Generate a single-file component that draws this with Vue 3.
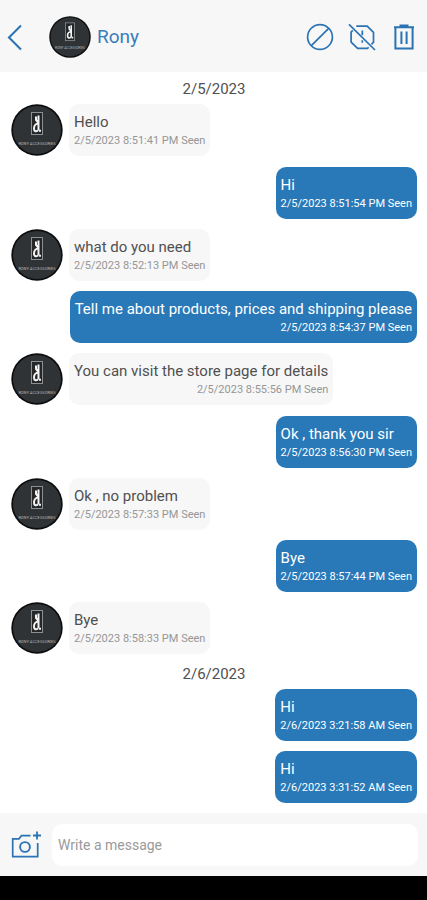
<script setup>
import { ref } from 'vue'

const draft = ref('')

const entries = [
  { type: 'date', text: '2/5/2023' },
  { type: 'in', text: 'Hello', time: '2/5/2023 8:51:41 PM Seen' },
  { type: 'out', text: 'Hi', time: '2/5/2023 8:51:54 PM Seen' },
  { type: 'in', text: 'what do you need', time: '2/5/2023 8:52:13 PM Seen' },
  { type: 'out', text: 'Tell me about products, prices and shipping please', time: '2/5/2023 8:54:37 PM Seen' },
  { type: 'in', text: 'You can visit the store page for details', time: '2/5/2023 8:55:56 PM Seen' },
  { type: 'out', text: 'Ok , thank you sir', time: '2/5/2023 8:56:30 PM Seen' },
  { type: 'in', text: 'Ok , no problem', time: '2/5/2023 8:57:33 PM Seen' },
  { type: 'out', text: 'Bye', time: '2/5/2023 8:57:44 PM Seen' },
  { type: 'in', text: 'Bye', time: '2/5/2023 8:58:33 PM Seen' },
  { type: 'date', text: '2/6/2023' },
  { type: 'out', text: 'Hi', time: '2/6/2023 3:21:58 AM Seen' },
  { type: 'out', text: 'Hi', time: '2/6/2023 3:31:52 AM Seen' },
]
</script>

<template>
  <div class="app">
    <header class="top">
      <button class="icon back" type="button" aria-label="Back">
        <svg width="16" height="28" viewBox="0 0 16 28"><path d="M14 2.5L2 14.5L14 26.5" stroke-width="2.1" /></svg>
      </button>
      <svg class="avatar small" viewBox="0 0 52 52" aria-hidden="true">
        <circle cx="26" cy="26" r="25.7" fill="#0c0d0e" />
        <circle cx="26" cy="26" r="24" fill="#303335" />
        <rect x="20.5" y="8.5" width="11" height="22" fill="#242628" stroke="#8d9092" />
        <path class="mark" d="M27.5 11.5V26.5M27.5 19.5C24.5 19.5 23 22 23 24.5S24.5 28 27 26.5M27.5 19L25 16V12.5M28 26.8h2" />
        <text x="26" y="41" class="brand" text-anchor="middle">RONY ACCESSORIES</text>
      </svg>
      <h1 class="name">Rony</h1>
      <div class="actions">
        <button class="icon" type="button" aria-label="Block">
          <svg width="28" height="28" viewBox="0 0 28 28"><circle cx="14" cy="14" r="12.4" /><path d="M5.3 22.7L22.7 5.3" /></svg>
        </button>
        <button class="icon" type="button" aria-label="Report off">
          <svg width="28" height="28" viewBox="0 0 28 28">
            <path d="M8.3 3.2h10.9l6.3 6.2v9.8l-2 2.1M20.7 24.3l-1.3 1.1H9.6l-6.5-6.3V9.2l1.7-1.8" />
            <path d="M14.3 7.6v4.6M14.3 17.3v2.4" />
            <path d="M1 1.3L27 27" />
          </svg>
        </button>
        <button class="icon" type="button" aria-label="Delete">
          <svg width="28" height="28" viewBox="0 0 28 28">
            <path d="M5.4 4.5v20.9h17.2V4.5" stroke-width="2" />
            <path d="M4 4.3h20M9.5 2.6h9M11.4 8.5v12.5M16.6 8.5v12.5" stroke-width="2" />
          </svg>
        </button>
      </div>
    </header>

    <main class="thread">
      <template v-for="(entry, i) in entries" :key="i">
        <time v-if="entry.type === 'date'" class="date">{{ entry.text }}</time>
        <article v-else class="row" :class="entry.type">
          <svg v-if="entry.type === 'in'" class="avatar" viewBox="0 0 52 52" aria-hidden="true">
            <circle cx="26" cy="26" r="25.7" fill="#0c0d0e" />
            <circle cx="26" cy="26" r="24" fill="#303335" />
            <rect x="20.5" y="8.5" width="11" height="22" fill="#242628" stroke="#8d9092" />
            <path class="mark" d="M27.5 11.5V26.5M27.5 19.5C24.5 19.5 23 22 23 24.5S24.5 28 27 26.5M27.5 19L25 16V12.5M28 26.8h2" />
            <text x="26" y="41" class="brand" text-anchor="middle">RONY ACCESSORIES</text>
          </svg>
          <div class="bubble">
            <p class="text">{{ entry.text }}</p>
            <time class="stamp">{{ entry.time }}</time>
          </div>
        </article>
      </template>
    </main>

    <form class="composer" @submit.prevent>
      <button class="icon" type="button" aria-label="Add photo">
        <svg width="30" height="28" viewBox="0 0 30 28">
          <path d="M19.5 4.7h-9L8 7.8H1.7v17.9h25V12" />
          <circle cx="14" cy="16" r="4.9" stroke-width="1.9" />
          <path d="M22 4.5h8M26 .6v7.8" stroke-width="1.8" />
        </svg>
      </button>
      <input v-model="draft" class="field" type="text" placeholder="Write a message" aria-label="Write a message" />
    </form>
    <div class="navbar"></div>
  </div>
</template>

<style>
body {
  margin: 0;
  background: #fff;
}
</style>

<style scoped>
.app {
  display: flex;
  flex-direction: column;
  min-height: 100vh;
  font-family: Roboto, sans-serif;
  color: #505050;
}
.top {
  display: flex;
  align-items: center;
  box-sizing: border-box;
  height: 72px;
  padding: 2px 9px 0 7px;
  background: #f7f7f7;
}
.icon {
  display: flex;
  padding: 0;
  border: 0;
  background: none;
  cursor: pointer;
}
.icon svg {
  fill: none;
  stroke: #2b73b3;
  stroke-width: 1.7;
}
.avatar {
  flex: none;
  width: 52px;
  height: 52px;
}
.avatar.small {
  width: 42px;
  height: 42px;
  margin-left: 26px;
}
.mark {
  fill: none;
  stroke: #f4f4f4;
  stroke-width: 2;
}
.brand {
  font: 4px Roboto, sans-serif;
  fill: #b4b6b8;
}
.name {
  margin: 0 0 0 6px;
  font-size: 19px;
  font-weight: 400;
  line-height: 24px;
  color: #3a7dbb;
}
.actions {
  display: flex;
  gap: 14px;
  margin-left: auto;
}
.thread {
  flex: 1;
  display: flex;
  flex-direction: column;
  justify-content: space-between;
  padding: 8px 10px 10px 11px;
}
.date {
  align-self: center;
  margin-bottom: -4px;
  font-size: 15px;
  line-height: 18px;
}
.row {
  display: flex;
  gap: 6px;
}
.row.out {
  justify-content: flex-end;
}
.bubble {
  display: flex;
  flex-direction: column;
  box-sizing: border-box;
  min-width: 140px;
  height: 52px;
  padding: 8px 5px 0;
  border-radius: 10px;
  background: #f7f7f7;
}
.out .bubble {
  background: #2979b9;
  color: #fff;
}
.text {
  margin: 0;
  font-size: 15px;
  line-height: 20px;
}
.stamp {
  align-self: flex-end;
  font-size: 11px;
  line-height: 18px;
  color: #969696;
}
.out .stamp {
  color: #fff;
}
.composer {
  display: flex;
  align-items: center;
  gap: 11px;
  box-sizing: border-box;
  height: 63px;
  padding: 0 9px 0 11px;
  background: #f7f7f7;
}
.field {
  flex: 1;
  min-width: 0;
  box-sizing: border-box;
  height: 42px;
  padding: 0 6px;
  border: 0;
  border-radius: 10px;
  background: #fff;
  font: 14px Roboto, sans-serif;
  color: #505050;
}
.field::placeholder {
  color: #9a9a9a;
}
.navbar {
  height: 24px;
  background: #000;
}
</style>
